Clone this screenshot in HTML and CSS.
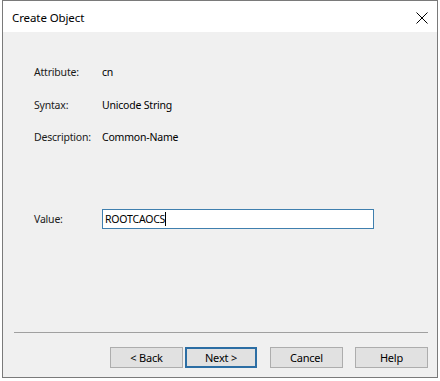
FILE: index.html
```html
<!DOCTYPE html>
<html lang="en">
<head>
    <meta charset="UTF-8">
    <title>Create Object</title>
    <link rel="stylesheet" href="styles.css">
</head>
<body>
    <div class="window">
        <div class="titlebar">
            <span class="title">Create Object</span>
            <svg class="close" width="12" height="12" viewBox="0 0 12 12">
                <path d="M0.5 0.5 L11.5 11.5 M11.5 0.5 L0.5 11.5" stroke="#000" stroke-width="1" fill="none"/>
            </svg>
        </div>
        <div class="content">
            <div class="info">
                <span class="label">Attribute:</span><span>cn</span>
                <span class="label">Syntax:</span><span>Unicode String</span>
                <span class="label">Description:</span><span>Common-Name</span>
            </div>
            <div class="value-row">
                <span class="label">Value:</span>
                <div class="input">ROOTCAOCS<span class="caret"></span></div>
            </div>
            <div class="footer">
                <div class="separator"></div>
                <div class="buttons">
                    <button class="btn">&lt; Back</button>
                    <button class="btn default">Next &gt;</button>
                    <button class="btn cancel">Cancel</button>
                    <button class="btn help">Help</button>
                </div>
            </div>
        </div>
    </div>
</body>
</html>
```

FILE: styles.css
```css
body {
    margin: 0;
    background-color: #ffffff;
    font-family: 'Noto Sans', sans-serif;
    font-size: 10.5px;
    letter-spacing: -0.2px;
    color: #000000;
}
.window {
    margin: 0 0 0 2px;
    width: 434px;
    height: 376px;
    border: 1px solid #7a7a7a;
    display: flex;
    flex-direction: column;
}
.titlebar {
    height: 31px;
    background-color: #ffffff;
    display: flex;
    align-items: center;
    justify-content: space-between;
    padding: 0 9px 0 9px;
}
.title {
    font-size: 11.5px;
    letter-spacing: -0.1px;
    margin-top: 2px;
}
.close {
    margin-top: 2px;
}
.content {
    flex: 1;
    background-color: #f0f0f0;
    display: flex;
    flex-direction: column;
    padding: 32px 0 9px 31px;
}
.info {
    display: grid;
    grid-template-columns: 68px 1fr;
    row-gap: 16.5px;
    line-height: 16px;
}
.label {
    color: #1a1a1a;
}
.value-row {
    display: grid;
    grid-template-columns: 68px 272px;
    align-items: center;
    margin-top: 64px;
}
.input {
    height: 18px;
    border: 1px solid #3f7fae;
    background-color: #ffffff;
    display: flex;
    align-items: center;
    padding-left: 2px;
    line-height: 16px;
}
.caret {
    display: inline-block;
    width: 1px;
    height: 14px;
    background-color: #000000;
}
.footer {
    margin-top: auto;
    margin-left: -20px;
    margin-right: 9px;
}
.separator {
    height: 1px;
    background-color: #a0a0a0;
}
.buttons {
    display: flex;
    justify-content: flex-end;
    margin-top: 14px;
}
.btn {
    width: 73px;
    height: 21px;
    border: 1px solid #adadad;
    background-color: #e1e1e1;
    font-family: 'Noto Sans', sans-serif;
    font-size: 11px;
    letter-spacing: -0.2px;
    color: #000000;
    padding: 0;
    margin-left: 2px;
}
.btn.default {
    border: 2px solid #2c6ea4;
    width: 72px;
}
.btn.cancel {
    margin-left: 13px;
}
.btn.help {
    margin-left: 12px;
}
```
